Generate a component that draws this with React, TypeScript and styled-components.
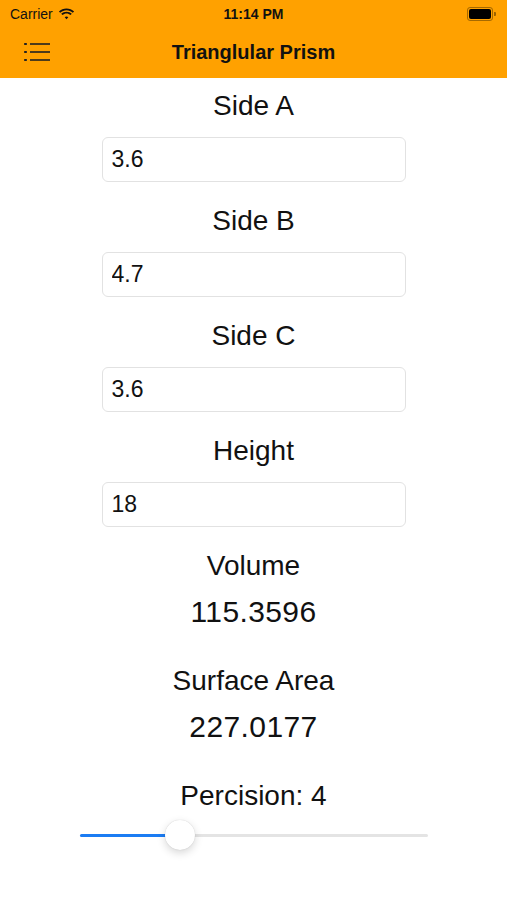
import React from 'react';
import styled, { createGlobalStyle } from 'styled-components';

const { useState } = React;

const GlobalStyle = createGlobalStyle`
  html, body {
    margin: 0;
    padding: 0;
    background: #ffffff;
  }
  body {
    font-family: 'Liberation Sans', Arial, sans-serif;
    color: #111111;
  }
`;

const Screen = styled.div`
  width: 507px;
  min-height: 900px;
  background: #ffffff;
`;

const Header = styled.header`
  background-color: #ffa100;
  height: 78px;
  display: flex;
  flex-direction: column;
`;

const StatusBar = styled.div`
  height: 28px;
  display: grid;
  grid-template-columns: 1fr auto 1fr;
  align-items: center;
  padding: 0 10px;
  font-size: 14px;
  color: #111;
`;

const Carrier = styled.div`
  display: flex;
  align-items: center;
  gap: 5px;
`;

const Time = styled.div`
  font-weight: bold;
  font-size: 14px;
`;

const Battery = styled.div`
  justify-self: end;
  display: flex;
  align-items: center;
  margin-right: 1px;

  .body {
    width: 22px;
    height: 10px;
    border: 1px solid rgba(0, 0, 0, 0.35);
    border-radius: 3px;
    padding: 1px;
    box-sizing: content-box;
  }
  .fill {
    width: 100%;
    height: 100%;
    background: #000;
    border-radius: 2px;
  }
  .cap {
    width: 2px;
    height: 4px;
    margin-left: 1px;
    background: rgba(0, 0, 0, 0.4);
    border-radius: 0 1px 1px 0;
  }
`;

const NavBar = styled.div`
  flex: 1;
  display: grid;
  grid-template-columns: 80px 1fr 80px;
  align-items: center;
  padding-bottom: 2px;
`;

const MenuButton = styled.div`
  padding-left: 24px;
  display: flex;
  align-items: center;
`;

const Title = styled.h1`
  margin: 0;
  text-align: center;
  font-size: 20px;
  font-weight: bold;
  color: #111;
`;

const Content = styled.main`
  display: flex;
  flex-direction: column;
  align-items: center;
  padding-top: 5px;
`;

const Field = styled.div`
  display: flex;
  flex-direction: column;
  align-items: center;
  margin-bottom: 16px;
`;

const Label = styled.div<{ $gap?: number }>`
  font-size: 28px;
  line-height: 46px;
  height: 46px;
  text-align: center;
  margin-bottom: ${p => p.$gap ?? 0}px;
`;

const Input = styled.input`
  width: 304px;
  height: 45px;
  box-sizing: border-box;
  border: 1px solid #e2e2e2;
  border-radius: 6px;
  padding: 0 9px;
  font-family: 'Liberation Sans', Arial, sans-serif;
  font-size: 23px;
  color: #111;
  outline: none;
  background: #fff;
`;

const Result = styled.div`
  display: flex;
  flex-direction: column;
  align-items: center;
  margin-bottom: 23px;
`;

const Value = styled.div`
  font-size: 30px;
  line-height: 46px;
  height: 46px;
  letter-spacing: 0.4px;
`;

const SliderWrap = styled.div`
  width: 348px;
  height: 32px;
  position: relative;
  display: flex;
  align-items: center;
`;

const Track = styled.div`
  width: 100%;
  height: 3px;
  border-radius: 2px;
  background: #e4e4e4;
`;

const TrackFill = styled.div`
  position: absolute;
  left: 0;
  top: 50%;
  height: 3px;
  margin-top: -1.5px;
  border-radius: 2px;
  background: #1b7cf3;
`;

const Thumb = styled.div`
  position: absolute;
  top: 50%;
  width: 30px;
  height: 30px;
  margin-top: -15px;
  margin-left: -15px;
  border-radius: 50%;
  background: #fff;
  box-shadow: 0 3px 8px rgba(0, 0, 0, 0.16), 0 0 1px rgba(0, 0, 0, 0.2);
`;

const Wifi = () => (
  <svg width="17" height="12" viewBox="0 0 17 12">
    <path d="M8.5 2.2c2.4 0 4.6.9 6.3 2.5l1.3-1.3C14.1 1.5 11.4.4 8.5.4S2.9 1.5.9 3.4l1.3 1.3C3.9 3.1 6.1 2.2 8.5 2.2z" fill="#111" />
    <path d="M8.5 5.5c1.5 0 2.9.6 4 1.6l1.3-1.3C12.4 4.5 10.5 3.7 8.5 3.7S4.6 4.5 3.2 5.8l1.3 1.3c1.1-1 2.5-1.6 4-1.6z" fill="#111" />
    <path d="M8.5 8.6c.7 0 1.3.3 1.8.7L8.5 11.2 6.7 9.3c.5-.4 1.1-.7 1.8-.7z" fill="#111" />
  </svg>
);

const MenuIcon = () => (
  <svg width="26" height="20" viewBox="0 0 26 20">
    <rect x="0" y="1" width="3" height="2" rx="0.8" fill="#222" />
    <rect x="0" y="9" width="3" height="2" rx="0.8" fill="#222" />
    <rect x="0" y="17" width="3" height="2" rx="0.8" fill="#222" />
    <rect x="6" y="1.2" width="20" height="1.6" fill="#222" />
    <rect x="6" y="9.2" width="20" height="1.6" fill="#222" />
    <rect x="6" y="17.2" width="20" height="1.6" fill="#222" />
  </svg>
);

const fields = [
  { key: 'a', label: 'Side A', value: '3.6' },
  { key: 'b', label: 'Side B', value: '4.7' },
  { key: 'c', label: 'Side C', value: '3.6' },
  { key: 'h', label: 'Height', value: '18' },
];

const App: React.FC = () => {
  const [values, setValues] = useState<Record<string, string>>(
    Object.fromEntries(fields.map(f => [f.key, f.value])),
  );
  const precision = 4;
  const percent = 100 / 348;

  return (
    <Screen>
      <GlobalStyle />
      <Header>
        <StatusBar>
          <Carrier>
            Carrier <Wifi />
          </Carrier>
          <Time>11:14 PM</Time>
          <Battery>
            <div className="body">
              <div className="fill" />
            </div>
            <div className="cap" />
          </Battery>
        </StatusBar>
        <NavBar>
          <MenuButton>
            <MenuIcon />
          </MenuButton>
          <Title>Trianglular Prism</Title>
          <div />
        </NavBar>
      </Header>
      <Content>
        {fields.map(f => (
          <Field key={f.key}>
            <Label $gap={8}>{f.label}</Label>
            <Input
              value={values[f.key]}
              onChange={e => setValues({ ...values, [f.key]: e.target.value })}
            />
          </Field>
        ))}
        <Result>
          <Label>Volume</Label>
          <Value>115.3596</Value>
        </Result>
        <Result>
          <Label>Surface Area</Label>
          <Value>227.0177</Value>
        </Result>
        <Label>Percision: {precision}</Label>
        <SliderWrap>
          <Track />
          <TrackFill style={{ width: `${percent * 100}%` }} />
          <Thumb style={{ left: `${percent * 100}%` }} />
        </SliderWrap>
      </Content>
    </Screen>
  );
};

export default App;
